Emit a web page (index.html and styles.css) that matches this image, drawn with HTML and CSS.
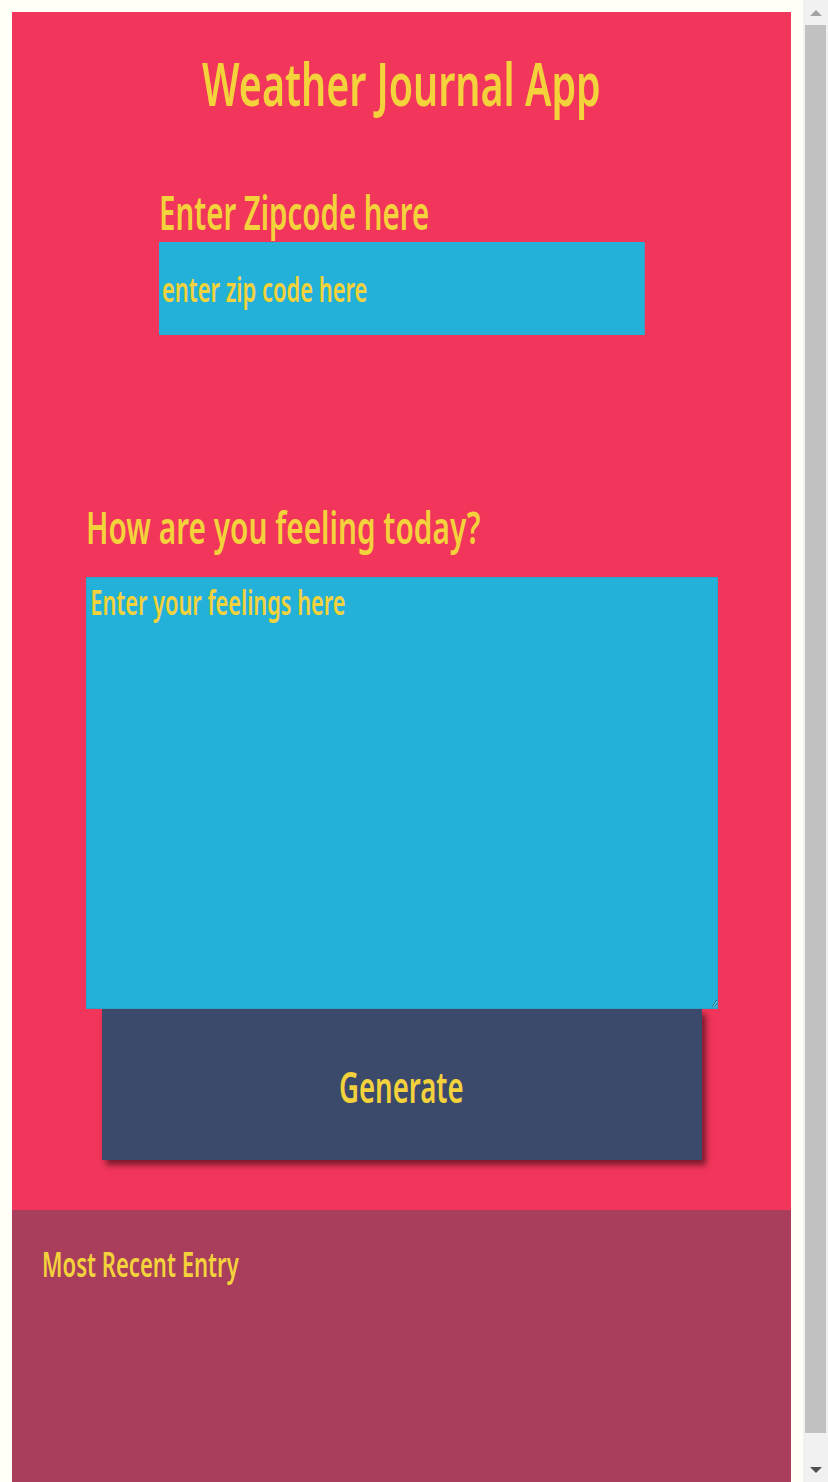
FILE: index.html
```html
<!DOCTYPE html>
<html lang="en">
<head>
<meta charset="utf-8">
<title>Weather Journal App</title>
<link rel="stylesheet" href="styles.css">
</head>
<body>
<main class="page">
  <section class="app">
    <h1 class="title"><span class="title-text">Weather Journal App</span></h1>
    <div class="field field--zip">
      <label class="label label--zip" for="zip">Enter Zipcode here</label>
      <input id="zip" class="zip-input" type="text" placeholder="enter zip code here">
    </div>
    <div class="field field--feel">
      <label class="label label--feel" for="feelings">How are you feeling today?</label>
      <textarea id="feelings" class="feel-input" placeholder="Enter your feelings here"></textarea>
    </div>
    <button class="generate" type="button"><span class="generate-text">Generate</span></button>
  </section>
  <section class="entry">
    <h2 class="entry-title">Most Recent Entry</h2>
  </section>
</main>
<div class="scrollbar" aria-hidden="true">
  <div class="scroll-btn"><span class="arrow arrow--up"></span></div>
  <div class="scroll-track"><div class="scroll-thumb"></div></div>
  <div class="scroll-btn"><span class="arrow arrow--down"></span></div>
</div>
</body>
</html>
```
FILE: styles.css
```css
body {
  margin: 12px;
  background: #fffff7;
  font-family: "Noto Sans", "DejaVu Sans Condensed", sans-serif;
  font-weight: 600;
  color: #f3d23b;
}

.page {
  width: 779px;
}

/* Oswald-like condensed look: the text is squeezed horizontally */
.title-text,
.generate-text {
  display: inline-block;
  transform: scaleX(var(--sx));
  transform-origin: center;
}

.label,
.entry-title,
.zip-input,
.feel-input {
  transform: scaleX(var(--sx));
  transform-origin: left center;
}

.app {
  background: #f2355a;
  padding: 41px 0 50px;
}

.title {
  margin: 0;
  font-size: 60px;
  line-height: 60px;
  font-weight: 600;
  text-align: center;
  --sx: 0.657;
}

.field {
  margin: 0 auto;
}

.field--zip {
  width: 486px;
  margin-top: 76px;
}

.field--feel {
  width: 632px;
  margin-top: 169px;
}

.label {
  display: block;
}

.label--zip {
  font-size: 46px;
  line-height: 46px;
  margin-bottom: 7px;
  --sx: 0.64;
}

.label--feel {
  font-size: 45px;
  line-height: 45px;
  margin-bottom: 28px;
  --sx: 0.662;
}

.zip-input,
.feel-input {
  display: block;
  box-sizing: border-box;
  background: #23b1d9;
  color: #f3d23b;
  font-family: inherit;
  font-weight: inherit;
  font-size: 35px;
  outline: none;
}

.zip-input {
  --sx: 0.626;
  width: calc(486px / var(--sx));
  height: 93px;
  border: none;
  padding: 0 4.8px;
}

.feel-input {
  --sx: 0.622;
  width: calc(632px / var(--sx));
  height: 432px;
  border: 1px solid #2aa3c6;
  padding: 4px 6px;
  line-height: 40px;
}

.zip-input::placeholder,
.feel-input::placeholder {
  color: #f3d23b;
  opacity: 1;
}

.generate {
  display: block;
  width: 600px;
  height: 151px;
  margin: 0 auto;
  padding: 3px 0 0;
  border: none;
  background: #3b4a6b;
  color: #f3d23b;
  font-family: inherit;
  font-weight: inherit;
  font-size: 43px;
  box-shadow: 4px 5px 6px rgba(0, 0, 0, 0.5);
  cursor: pointer;
  --sx: 0.641;
}

.entry {
  background: #a83d5c;
  height: 284px;
  box-sizing: border-box;
  padding: 36px 30px;
}

.entry-title {
  margin: 0;
  font-size: 35px;
  line-height: 35px;
  font-weight: 600;
  --sx: 0.631;
}

/* imitation of the browser's classic scrollbar shown in the capture */
.scrollbar {
  position: fixed;
  top: 0;
  right: 0;
  width: 25px;
  height: 100vh;
  background: #f1f1f1;
  display: flex;
  flex-direction: column;
}

.scroll-btn {
  height: 24px;
  display: flex;
  align-items: center;
  justify-content: center;
  flex: none;
}

.scroll-track {
  flex: 1;
  padding: 1px 2px 25px;
  display: flex;
}

.scroll-thumb {
  flex: 1;
  background: #c1c1c1;
}

.arrow {
  width: 0;
  height: 0;
  border-left: 6px solid transparent;
  border-right: 6px solid transparent;
}

.arrow--up {
  border-bottom: 6px solid #a3a3a3;
  margin-top: 2px;
}

.arrow--down {
  border-top: 6px solid #505050;
}
```
